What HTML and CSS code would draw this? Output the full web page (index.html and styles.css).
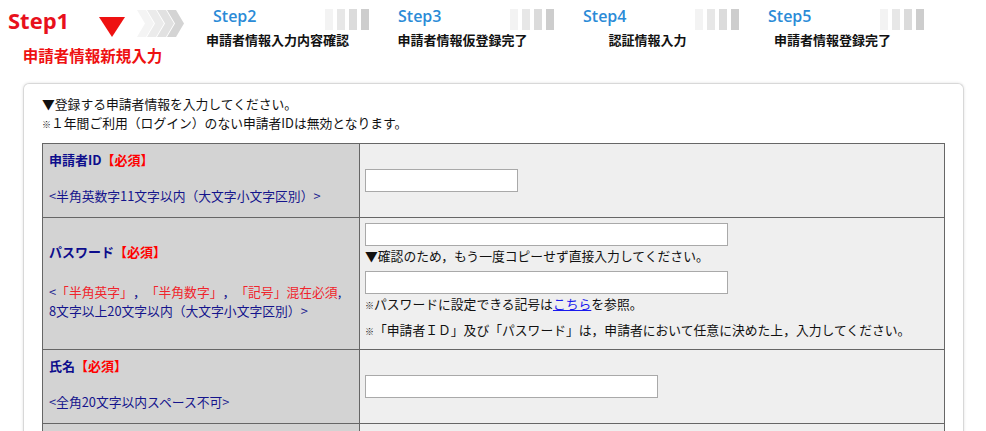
FILE: index.html
```html
<!DOCTYPE html>
<html lang="ja">
<head>
<meta charset="utf-8">
<title>申請者情報新規入力</title>
<link rel="stylesheet" href="styles.css">
</head>
<body>
<div class="steps">
  <div class="step step1">
    <div class="step-head">
      <div class="step1-name">Step1</div>
      <svg class="tri" width="26" height="20" viewBox="0 0 26 20"><polygon points="0,0 26,0 13,20" fill="#ee1111"/></svg>
      <svg class="chev" width="48" height="27" viewBox="0 0 48 27">
        <polygon points="0,0 9,0 17,13.5 9,27 0,27 8,13.5" fill="#f4f4f4"/>
        <polygon points="10,0 19,0 27,13.5 19,27 10,27 18,13.5" fill="#ebebeb"/>
        <polygon points="20,0 29,0 37,13.5 29,27 20,27 28,13.5" fill="#e1e1e1"/>
        <polygon points="30,0 39,0 47,13.5 39,27 30,27 38,13.5" fill="#d4d4d4"/>
      </svg>
    </div>
    <div class="step1-label">申請者情報新規入力</div>
  </div>
  <div class="step">
    <div class="step-head">
      <div class="step-name">Step2</div>
      <div class="bars"><span></span><span></span><span></span><span></span></div>
    </div>
    <div class="step-label">申請者情報入力内容確認</div>
  </div>
  <div class="step">
    <div class="step-head">
      <div class="step-name">Step3</div>
      <div class="bars"><span></span><span></span><span></span><span></span></div>
    </div>
    <div class="step-label">申請者情報仮登録完了</div>
  </div>
  <div class="step">
    <div class="step-head">
      <div class="step-name">Step4</div>
      <div class="bars"><span></span><span></span><span></span><span></span></div>
    </div>
    <div class="step-label">認証情報入力</div>
  </div>
  <div class="step">
    <div class="step-head">
      <div class="step-name">Step5</div>
      <div class="bars"><span></span><span></span><span></span><span></span></div>
    </div>
    <div class="step-label">申請者情報登録完了</div>
  </div>
</div>

<div class="card">
  <p class="intro">▼登録する申請者情報を入力してください。</p>
  <p class="intro"><span class="kome">※</span>１年間ご利用（ログイン）のない申請者IDは無効となります。</p>
  <table class="form">
    <colgroup><col class="col-label"><col></colgroup>
    <tr>
      <th>
        <div class="label">申請者ID<span class="req">【必須】</span></div>
        <div class="hint">&lt;半角英数字11文字以内（大文字小文字区別）&gt;</div>
      </th>
      <td><input class="in in-s" type="text"></td>
    </tr>
    <tr>
      <th>
        <div class="label">パスワード<span class="req">【必須】</span></div>
        <div class="hint hint-wide">&lt;<span class="hint-red">「半角英字」</span>，<span class="hint-red">「半角数字」</span>，<span class="hint-red">「記号」混在必須</span>,<br>8文字以上20文字以内（大文字小文字区別）&gt;</div>
      </th>
      <td class="multi">
        <input class="in in-l" type="password">
        <p class="note">▼確認のため，もう一度コピーせず直接入力してください。</p>
        <input class="in in-l in-gap" type="password">
        <p class="note"><span class="kome">※</span>パスワードに設定できる記号は<a href="#" class="link">こちら</a>を参照。</p>
        <p class="note note-last"><span class="kome">※</span>「申請者ＩＤ」及び「パスワード」は，申請者において任意に決めた上，入力してください。</p>
      </td>
    </tr>
    <tr>
      <th>
        <div class="label">氏名<span class="req">【必須】</span></div>
        <div class="hint">&lt;全角20文字以内スペース不可&gt;</div>
      </th>
      <td><input class="in in-m" type="text"></td>
    </tr>
    <tr class="row-next">
      <th></th>
      <td></td>
    </tr>
  </table>
</div>
</body>
</html>
```

FILE: styles.css
```css
html, body {
  margin: 0;
  padding: 0;
  background: #ffffff;
}
body {
  font-family: "Noto Sans CJK JP", "Liberation Sans", sans-serif;
  color: #111;
  width: 986px;
  text-spacing-trim: space-all;
}

/* ---------- step header ---------- */
.steps {
  display: flex;
  height: 83px;
}
.step {
  width: 185px;
  flex: none;
}
.step-head {
  display: flex;
  align-items: flex-start;
  height: 32px;
}
.step-name {
  margin-left: 28px;
  padding-top: 6px;
  font-family: "Open Sans", "Liberation Sans", sans-serif;
  font-weight: 600;
  font-size: 16px;
  line-height: 20px;
  color: #2b8bd7;
}
.bars {
  margin-left: auto;
  margin-right: 1px;
  margin-top: 9px;
  display: flex;
  gap: 4px;
}
.bars span {
  width: 8px;
  height: 21px;
  background: #f3f3f3;
}
.bars span:nth-child(2) { background: #e7e7e7; }
.bars span:nth-child(3) { background: #dbdbdb; }
.bars span:nth-child(4) { background: #cdcdcd; }
.step-label {
  text-align: center;
  font-weight: bold;
  font-size: 13px;
  line-height: 16px;
  color: #111;
}

.step1 .step-head {
  height: 40px;
}
.step1-name {
  width: 99px;
  box-sizing: border-box;
  padding-left: 8px;
  padding-top: 6px;
  font-family: "Open Sans", "Liberation Sans", sans-serif;
  font-weight: bold;
  font-size: 22px;
  line-height: 28px;
  color: #e8101c;
}
.tri {
  margin-top: 17px;
}
.chev {
  margin-left: 12px;
  margin-top: 10px;
}
.step1-label {
  margin-top: 7px;
  text-align: center;
  font-weight: bold;
  font-size: 15.5px;
  line-height: 16px;
  color: #ee1111;
}

/* ---------- card ---------- */
.card {
  margin: 0 22px 0 23px;
  padding: 10px 18px 0 18px;
  border: 1px solid #d8d8d8;
  border-bottom: none;
  border-radius: 6px 6px 0 0;
  box-shadow: 0 0 3px rgba(0, 0, 0, 0.12);
}
.intro {
  margin: 0;
  font-size: 12.8px;
  line-height: 19px;
  color: #111;
}
.kome {
  font-size: 9px;
  line-height: 1;
}

/* ---------- table ---------- */
.form {
  margin-top: 11px;
  width: 100%;
  border-collapse: collapse;
  table-layout: fixed;
}
.col-label {
  width: 317px;
}
.form th,
.form td {
  border: 1px solid #666;
}
.form th {
  background: #d3d3d3;
  text-align: left;
  font-weight: normal;
  vertical-align: middle;
  padding: 6px 7px 11px 6px;
}
.form td {
  background: #efefef;
  vertical-align: middle;
  padding: 5px 6px 5px 5px;
}
.row-next th,
.row-next td {
  height: 60px;
}
.label {
  font-weight: bold;
  font-size: 13px;
  line-height: 20px;
  color: #0d0d8c;
}
.req {
  color: #ff0000;
}
.hint {
  margin-top: 16px;
  font-size: 12.8px;
  line-height: 20px;
  color: #14148c;
}
.hint-wide {
  margin-top: 20px;
  line-height: 19px;
}
.hint-red {
  color: #f0242c;
}

.in {
  display: block;
  box-sizing: border-box;
  height: 23px;
  margin: 0;
  border: 1px solid #a9a9a9;
  border-radius: 0;
  background: #fff;
  padding: 0 4px;
}
.in-s { width: 153px; }
.in-m { width: 293px; }
.in-l { width: 363px; }
.in-gap { margin-top: 6px; }

.note {
  margin: 0;
  font-size: 12.8px;
  line-height: 19px;
  color: #111;
}
.note-last {
  margin-top: 7px;
  margin-bottom: 5px;
}
.link {
  color: #1a1aee;
  text-decoration: underline;
}
```
